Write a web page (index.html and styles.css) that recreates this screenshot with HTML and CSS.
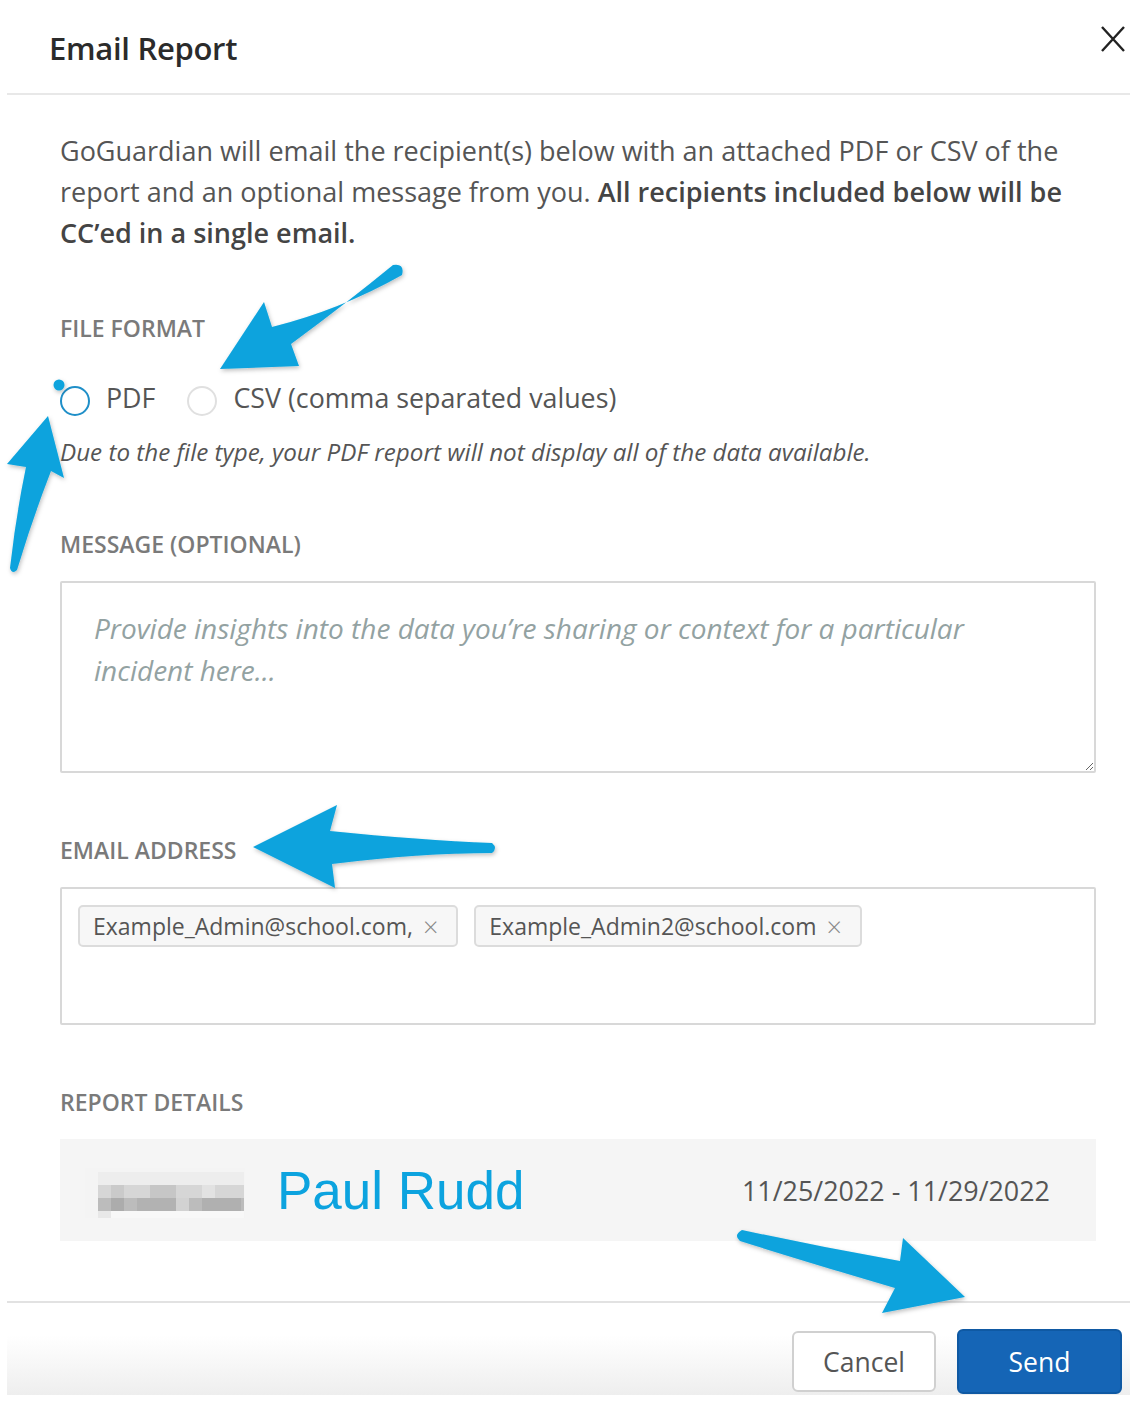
FILE: index.html
```html
<!DOCTYPE html>
<html lang="en">
<head>
    <meta charset="UTF-8">
    <meta name="viewport" content="width=device-width, initial-scale=1.0">
    <title>Email Report</title>
    <link rel="stylesheet" href="styles.css">
</head>
<body>
    <div class="modal">
        <div class="modal-header">
            <h2>Email Report</h2>
            <button class="close" aria-label="Close">
                <svg width="26" height="26" viewBox="0 0 26 26">
                    <path d="M2 1 L24 25 M24 1 L2 25" stroke="#222" stroke-width="2.4" fill="none"/>
                </svg>
            </button>
        </div>

        <div class="modal-body">
            <p class="intro">GoGuardian will email the recipient(s) below with an attached PDF or CSV of the report and an optional message from you. <b>All recipients included below will be CC’ed in a single email.</b></p>

            <div class="section first">
                <div class="label">File Format</div>
                <div class="radios">
                    <label class="radio"><span class="dot selected"></span>PDF</label>
                    <label class="radio"><span class="dot"></span>CSV (comma separated values)</label>
                </div>
                <p class="note">Due to the file type, your PDF report will not display all of the data available.</p>
            </div>

            <div class="section">
                <div class="label">Message (Optional)</div>
                <textarea class="message" placeholder="Provide insights into the data you’re sharing or context for a particular incident here..."></textarea>
            </div>

            <div class="section">
                <div class="label">Email Address</div>
                <div class="emails">
                    <span class="chip">Example_Admin@school.com, <span class="x">×</span></span>
                    <span class="chip">Example_Admin2@school.com <span class="x">×</span></span>
                </div>
            </div>

            <div class="section">
                <div class="label">Report Details</div>
                <div class="details">
                    <svg class="pixelated" width="160" height="50" viewBox="0 0 160 50">
                        <rect x="0" y="0" width="160" height="50" fill="#f4f4f4"/>
                        <rect x="13" y="4" width="146" height="13" fill="#ededed"/>
                        <rect x="13" y="17" width="146" height="13" fill="#d6d6d6"/>
                        <rect x="26" y="17" width="13" height="13" fill="#cacaca"/>
                        <rect x="65" y="17" width="26" height="13" fill="#c6c6c6"/>
                        <rect x="117" y="17" width="13" height="13" fill="#e2e2e2"/>
                        <rect x="13" y="30" width="146" height="13" fill="#bcbcbc"/>
                        <rect x="26" y="30" width="13" height="13" fill="#acacac"/>
                        <rect x="52" y="30" width="39" height="13" fill="#b2b2b2"/>
                        <rect x="91" y="30" width="13" height="13" fill="#d2d2d2"/>
                        <rect x="117" y="30" width="39" height="13" fill="#b0b0b0"/>
                        <rect x="13" y="43" width="146" height="7" fill="#f8f8f8"/>
                        <rect x="13" y="43" width="13" height="7" fill="#e8e8e8"/>
                    </svg>
                    <span class="name">Paul Rudd</span>
                    <span class="dates">11/25/2022 - 11/29/2022</span>
                </div>
            </div>
        </div>

        <div class="modal-footer">
            <button class="btn cancel">Cancel</button>
            <button class="btn send">Send</button>
        </div>
    </div>

    <!-- callout arrows drawn over the dialog -->
    <svg class="callouts" width="1144" height="1402" viewBox="0 0 1144 1402">
        <defs>
            <filter id="soft" x="-20%" y="-20%" width="140%" height="140%">
                <feDropShadow dx="1" dy="2" stdDeviation="2" flood-color="#000" flood-opacity="0.25"/>
            </filter>
        </defs>
        <g fill="#0aa3dd" filter="url(#soft)">
            <path d="M402 275 Q340 310 272 327 L264 302 L220 369 L299 366 L291 344 Q348 302 393 265 Q405 263 402 275 Z"/>
            <path d="M48 416 L64 478 L51 471 Q32 520 17 570 Q12 575 10 568 Q16 515 26 467 L7 464 Z"/>
            <path d="M253 847 L337 805 L330 831 Q420 840 492 843 Q498 848 492 853 Q420 853 332 864 L335 888 Z"/>
            <path d="M742 1230 Q820 1247 900 1261 L903 1238 L965 1297 L882 1313 L895 1288 Q810 1263 740 1241 Q733 1235 742 1230 Z"/>
            <circle cx="59" cy="385" r="5.5"/>
        </g>
    </svg>
</body>
</html>
```

FILE: styles.css
```css
body {
    margin: 0;
    padding: 0;
    background: #fff;
    font-family: "Open Sans", "Noto Sans", sans-serif;
    color: #555;
}

.modal {
    position: relative;
    width: 1123px;
    margin-left: 7px;
}

.modal-header {
    display: flex;
    justify-content: space-between;
    align-items: flex-start;
    height: 93px;
    padding: 0 4px 0 42px;
    border-bottom: 2px solid #e8e8e8;
}

.modal-header h2 {
    margin: 27px 0 0;
    font-size: 31px;
    font-weight: 600;
    color: #2b2b2b;
    line-height: 42px;
    letter-spacing: -0.3px;
}

.close {
    margin-top: 26px;
    padding: 0;
    border: none;
    background: none;
}

.modal-body {
    padding: 35px 34px 60px 53px;
}

.intro {
    margin: 0;
    padding-right: 20px;
    font-size: 27px;
    line-height: 41px;
    color: #555;
}

.intro b {
    font-weight: 600;
    color: #444;
}

.section {
    margin-top: 62px;
}

.section.first {
    margin-top: 60px;
}

.label {
    font-size: 23px;
    font-weight: 600;
    line-height: 30px;
    text-transform: uppercase;
    color: #7a7a7a;
    margin-bottom: 22px;
}

.section.first .label {
    margin-bottom: 34px;
}

.radios {
    display: flex;
    align-items: center;
    height: 40px;
    gap: 32px;
}

.radio {
    display: flex;
    align-items: center;
    gap: 16px;
    font-size: 26.8px;
    color: #555;
}

.dot {
    display: inline-block;
    width: 26px;
    height: 26px;
    border-radius: 50%;
    border: 2px solid #e0e0e0;
    margin-top: 8px;
}

.dot.selected {
    border-color: #1f8fc8;
}

.note {
    margin: 20px 0 0;
    font-size: 24.2px;
    font-style: italic;
    line-height: 30px;
    color: #555;
}

.message {
    display: block;
    box-sizing: border-box;
    width: 100%;
    height: 192px;
    padding: 24px 32px;
    border: 2px solid #d8d8d8;
    border-radius: 2px;
    font-family: "Open Sans", sans-serif;
    font-size: 28px;
    line-height: 42px;
    resize: vertical;
}

.message::placeholder {
    font-style: italic;
    color: #93a2a2;
}

.emails {
    box-sizing: border-box;
    height: 138px;
    padding: 16px 16px;
    border: 2px solid #d8d8d8;
    border-radius: 2px;
    display: flex;
    align-items: flex-start;
    gap: 16px;
}

.chip {
    display: inline-flex;
    align-items: center;
    height: 38px;
    padding: 0 18px 0 13px;
    background: #f7f7f7;
    border: 2px solid #dcdcdc;
    border-radius: 5px;
    font-size: 23px;
    color: #555;
}

.chip .x {
    margin-left: 10px;
    font-size: 27px;
    color: #888;
    font-weight: 300;
}

.details {
    display: flex;
    align-items: center;
    height: 102px;
    padding: 0 46px 0 25px;
    background: #f5f5f5;
}

.pixelated {
    margin-top: 6px;
}

.name {
    margin-left: 32px;
    font-family: "Liberation Sans", Arial, sans-serif;
    font-size: 53px;
    color: #0ca3df;
}

.dates {
    margin-left: auto;
    font-size: 26.9px;
    color: #555;
}

.modal-footer {
    display: flex;
    justify-content: flex-end;
    gap: 21px;
    height: 94px;
    padding: 26px 8px 0 0;
    box-sizing: border-box;
    border-top: 2px solid #e2e2e2;
    background: linear-gradient(to bottom, #fff 35%, #eeeeee 100%);
}

.btn {
    font-family: "Open Sans", sans-serif;
    font-size: 26.5px;
    border-radius: 6px;
    cursor: pointer;
}

.cancel {
    width: 144px;
    height: 61px;
    margin-top: 2px;
    background: #fff;
    border: 2px solid #d0d0d0;
    color: #555;
}

.send {
    width: 165px;
    height: 65px;
    background: #1565b6;
    border: 2px solid #0f59a3;
    color: #fff;
}

.callouts {
    position: absolute;
    top: 0;
    left: 0;
    pointer-events: none;
}
```
